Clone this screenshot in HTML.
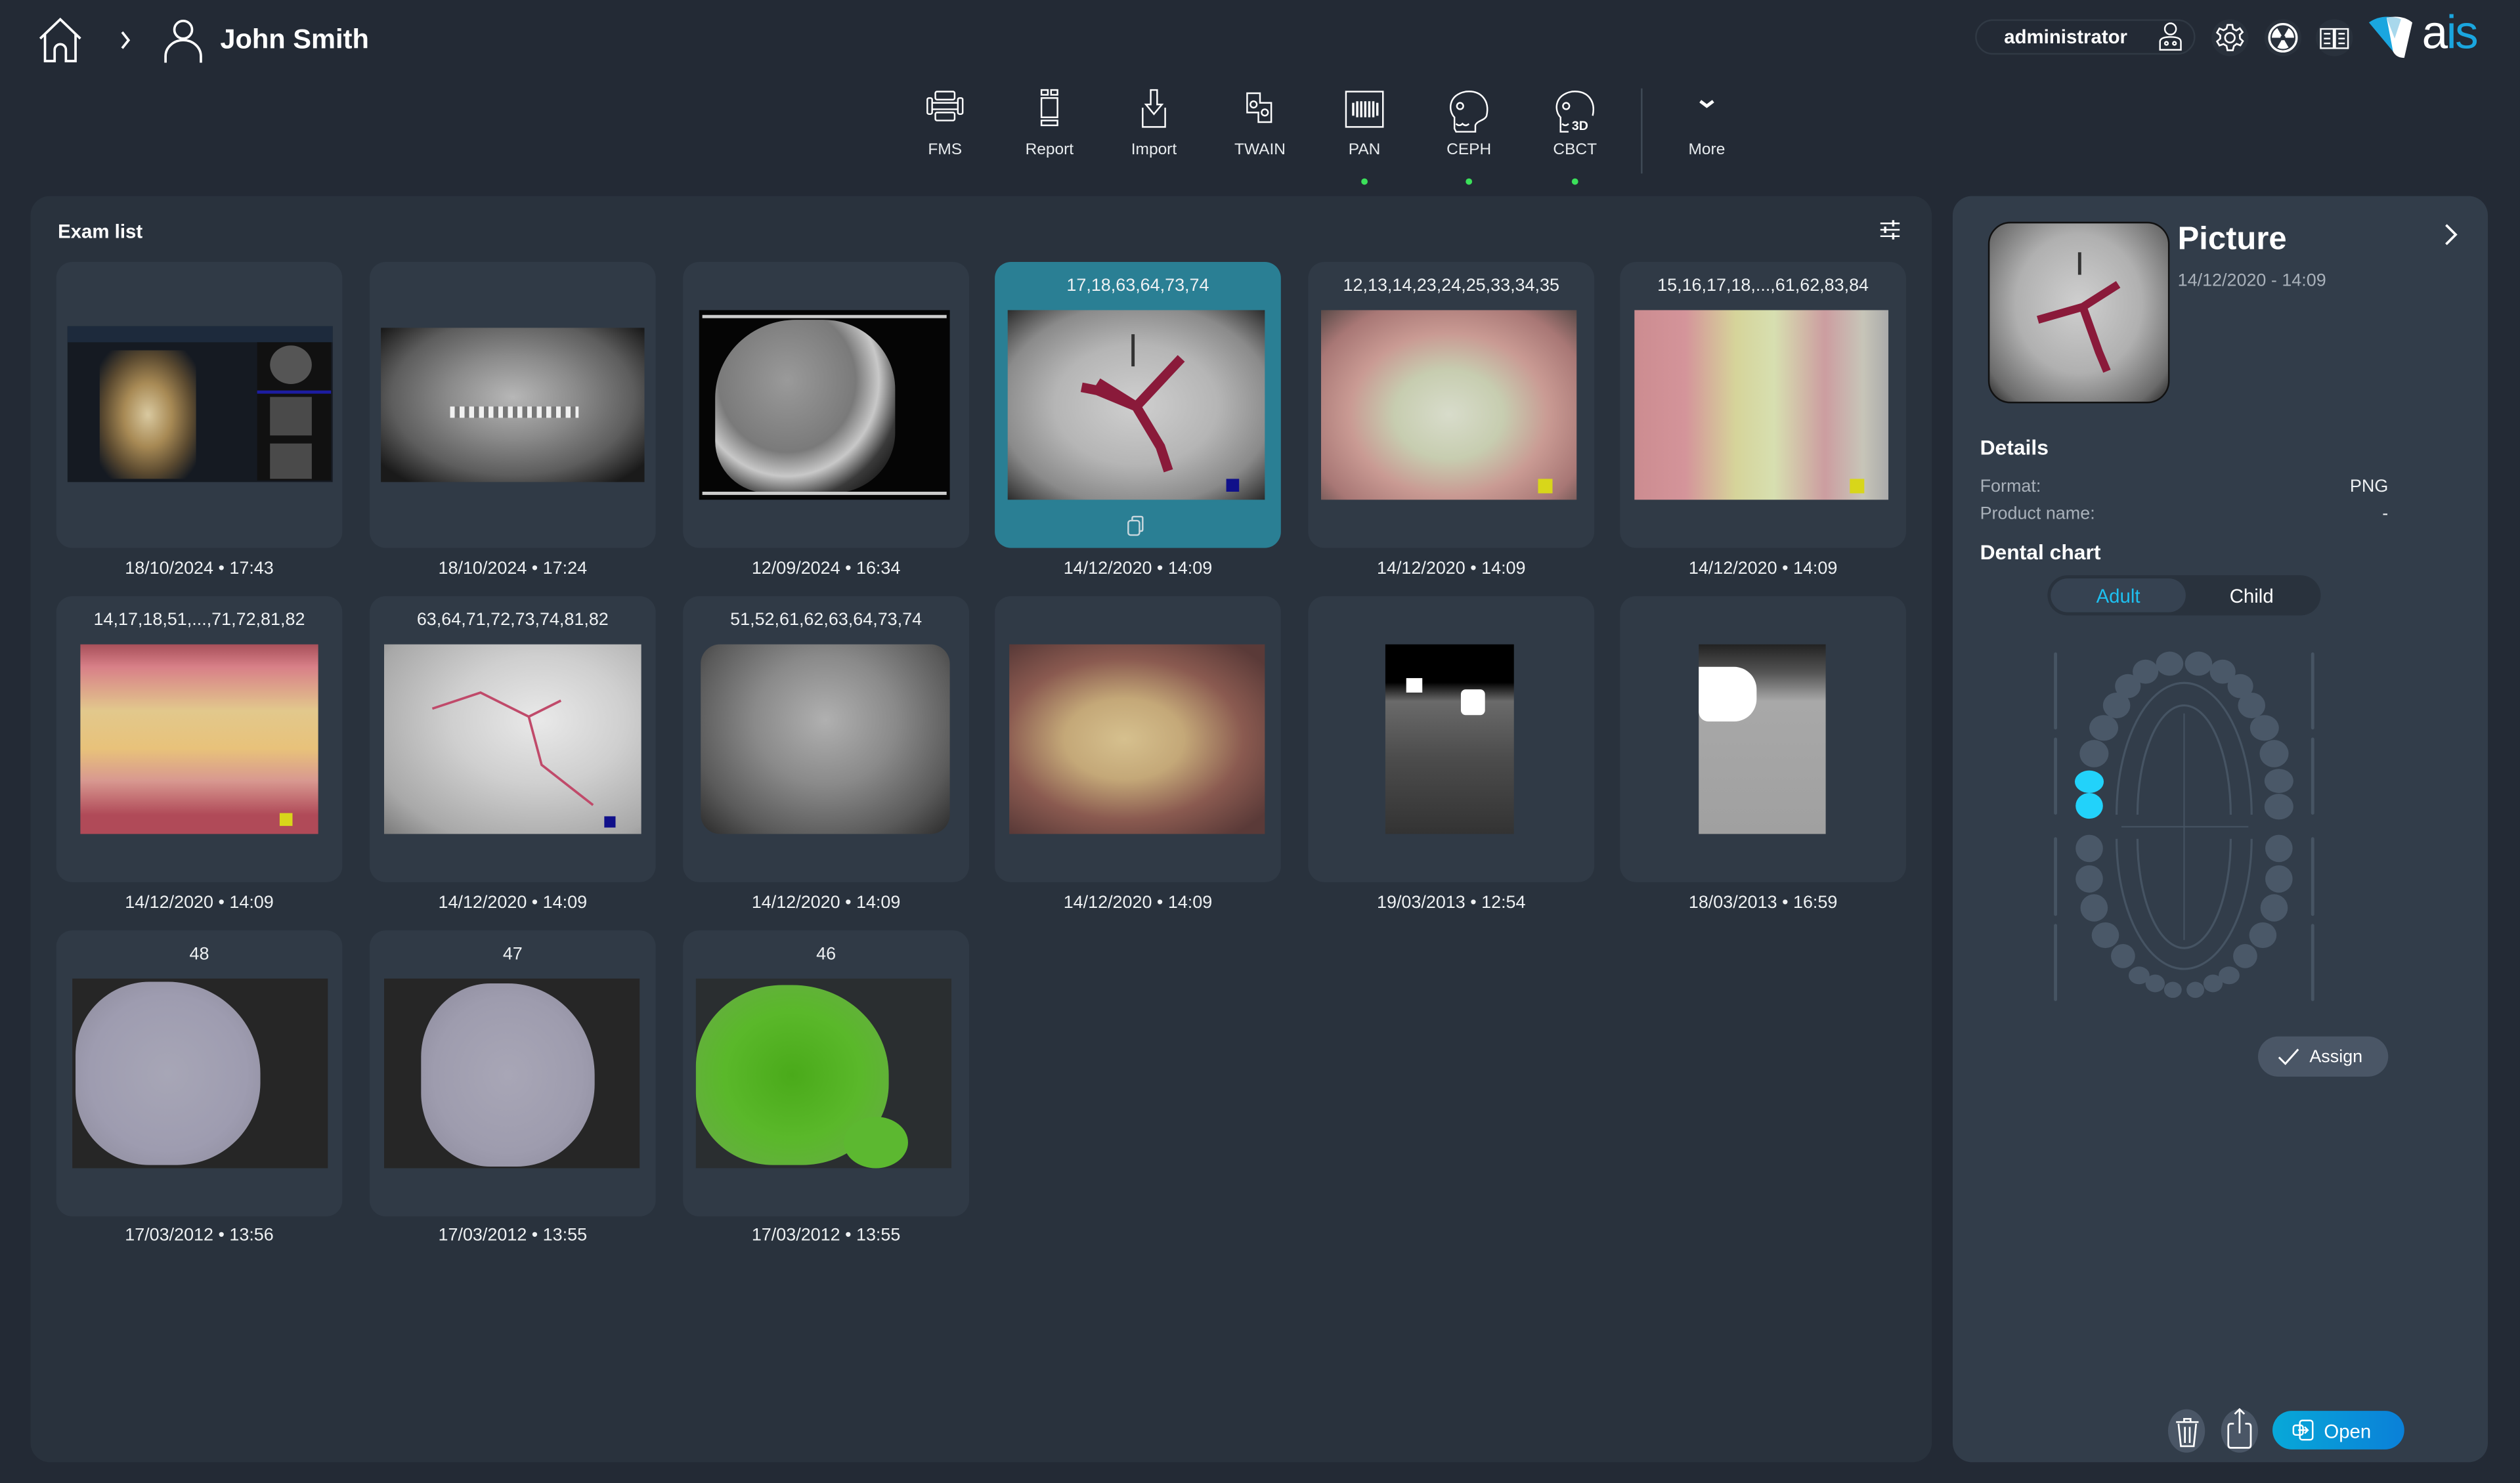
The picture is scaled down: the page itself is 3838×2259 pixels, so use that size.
<!DOCTYPE html>
<html><head><meta charset="utf-8">
<style>
html,body{margin:0;padding:0;background:#232a35;overflow:hidden;}
body{width:3838px;height:2258px;}
#s{position:absolute;left:0;top:0;width:1568px;height:923px;transform:scale(2.44770);transform-origin:0 0;font-family:"Liberation Sans",sans-serif;color:#fff;background:#232a35;}
.a{position:absolute;}
.card{position:absolute;width:178px;height:178px;border-radius:10px;background:#303a46;}
.sel{background:#2a7f94;}
.lbl{position:absolute;width:178px;text-align:center;font-size:11px;color:#eef1f3;}
.date{position:absolute;width:178px;text-align:center;font-size:11px;color:#eef1f3;}
.im{position:absolute;}
.tb{position:absolute;top:55px;width:60px;text-align:center;font-size:10px;color:#e8ecef;}
.tb svg{display:block;margin:0 auto;}
.tb span{position:absolute;left:0;width:60px;top:33px;}
.dot{position:absolute;width:4px;height:4px;border-radius:2px;background:#3be05a;top:111px;}
.circ{position:absolute;top:12px;width:23px;height:23px;border-radius:12px;background:#29313c;}
</style></head><body><div id="s">

<svg class="a" style="left:22px;top:10px" width="32" height="32" viewBox="0 0 32 32" fill="none" stroke="#fff" stroke-width="1.5"><path d="M3 14 L15.5 2 L28 14 M6 11 V28 H12 V21 A3.5 3.5 0 0 1 19 21 V28 H25 V11"/></svg>
<svg class="a" style="left:73px;top:18px" width="10" height="14" viewBox="0 0 10 14" fill="none" stroke="#fff" stroke-width="1.5"><path d="M3 2 L7 7 L3 12"/></svg>
<svg class="a" style="left:101px;top:11px" width="26" height="30" viewBox="0 0 26 30" fill="none" stroke="#fff" stroke-width="1.5"><circle cx="13" cy="7.5" r="5.5"/><path d="M2 28 V24 A11 10 0 0 1 24 24 V28"/></svg>
<div class="a" style="left:137px;top:15px;font-size:17px;font-weight:bold;">John Smith</div>

<div class="tb" style="left:558px"><svg width="26" height="24" viewBox="0 0 26 24" fill="none" stroke="#fff" stroke-width="1"><rect x="2" y="6" width="3" height="10" rx="1"/><rect x="21" y="6" width="3" height="10" rx="1"/><rect x="7" y="2" width="12" height="5" rx="1"/><rect x="7" y="15" width="12" height="5" rx="1"/><path d="M5 9 H21 M5 13 H21"/></svg><span>FMS</span></div>
<div class="tb" style="left:623px"><svg width="26" height="24" viewBox="0 0 26 24" fill="none" stroke="#fff" stroke-width="1"><rect x="8" y="1" width="4" height="3"/><rect x="14" y="1" width="4" height="3"/><rect x="8" y="6" width="10" height="12"/><rect x="8" y="20" width="10" height="3"/></svg><span>Report</span></div>
<div class="tb" style="left:688px"><svg width="26" height="26" viewBox="0 0 26 26" fill="none" stroke="#fff" stroke-width="1"><path d="M11 1 H15 V10 H18 L13 16 L8 10 H11 Z"/><path d="M6 12 V24 H20 V12"/></svg><span>Import</span></div>
<div class="tb" style="left:754px"><svg width="26" height="26" viewBox="0 0 26 26" fill="none" stroke="#fff" stroke-width="1"><path d="M5 3 H13 V9 H20 V21 H12 V15 H5 Z"/><circle cx="9" cy="10" r="2"/><circle cx="16" cy="15" r="2"/></svg><span>TWAIN</span></div>
<div class="tb" style="left:819px"><svg width="26" height="26" viewBox="0 0 26 26" fill="none" stroke="#fff" stroke-width="1"><rect x="1.5" y="2" width="23" height="22"/><path d="M6 9 V17 M8.5 8 V18 M11 8 V18 M13.5 8 V18 M16 8 V18 M18.5 8 V18 M21 9 V17" stroke-width="1.4"/></svg><span>PAN</span></div>
<div class="tb" style="left:884px"><svg width="28" height="30" viewBox="0 0 28 30" fill="none" stroke="#fff" stroke-width="1"><path d="M5 25 V18 C1 14 1 4 12 2 C22 1 27 8 25 17 C24 20 19 20 18 23 V27 H6 Z"/><circle cx="8.5" cy="11" r="2"/><path d="M6 22 Q8 24 10 22 Q12 24 14 22"/></svg><span>CEPH</span></div>
<div class="tb" style="left:950px"><svg width="28" height="30" viewBox="0 0 28 30" fill="none" stroke="#fff" stroke-width="1"><path d="M5 25 V18 C1 14 1 4 12 2 C22 1 27 8 25 17"/><path d="M5 25 V27 H10"/><circle cx="8.5" cy="11" r="2"/><path d="M6 22 Q8 24 10 22"/><text x="12" y="26" font-size="8" font-weight="bold" fill="#fff" stroke="none" font-family="Liberation Sans">3D</text></svg><span>CBCT</span></div>
<div class="dot" style="left:847px"></div><div class="dot" style="left:912px"></div><div class="dot" style="left:978px"></div>
<div class="a" style="left:1021px;top:55px;width:1px;height:53px;background:#3f4a56"></div>
<div class="tb" style="left:1032px"><svg width="26" height="24" viewBox="0 0 26 24" fill="none" stroke="#fff" stroke-width="2"><path d="M9 8 L13 11 L17 8"/></svg><span>More</span></div>

<div class="a" style="left:1229px;top:12px;width:137px;height:22px;border-radius:12px;background:#232a35;border:1px solid #303944;box-sizing:border-box"></div>
<div class="a" style="left:1247px;top:16px;font-size:12px;font-weight:bold">administrator</div>
<svg class="a" style="left:1342px;top:13px" width="17" height="19" viewBox="0 0 17 19" fill="none" stroke="#fff" stroke-width="1"><circle cx="8.5" cy="5" r="3.5"/><path d="M2 18 V13 Q2 10 8.5 10 Q15 10 15 13 V18 Z"/><circle cx="6" cy="14" r="1"/><circle cx="11" cy="14" r="1"/></svg>
<div class="circ" style="left:1376px"></div><div class="circ" style="left:1409px"></div><div class="circ" style="left:1441px"></div>
<svg class="a" style="left:1378px;top:14px" width="19" height="19" viewBox="0 0 19 19" fill="none" stroke="#fff" stroke-width="1.1"><path d="M8 1.5 H11 L11.5 4 L13.5 5 L15.7 3.6 L17.4 6 L15.6 7.7 L15.8 10 L17.6 11.6 L16 14.2 L13.7 13.3 L12 14.6 L11.3 17.3 H8 L7.4 14.6 L5.5 13.4 L3 14.3 L1.5 11.8 L3.5 10 V8 L1.5 6.3 L3 3.7 L5.5 4.8 L7.4 3.8 Z"/><circle cx="9.5" cy="9.5" r="3"/></svg>
<svg class="a" style="left:1410px;top:13px" width="21" height="21" viewBox="0 0 21 21"><circle cx="10.5" cy="10.5" r="8.5" fill="none" stroke="#fff" stroke-width="1.4"/><path d="M10.5 10.5 L7 4.5 A7 7 0 0 0 3.6 10.5 Z M10.5 10.5 L14 4.5 A7 7 0 0 1 17.4 10.5 Z M10.5 10.5 L7 16.5 A7 7 0 0 0 14 16.5 Z" fill="#fff"/><circle cx="10.5" cy="10.5" r="1.6" fill="#29313c"/></svg>
<svg class="a" style="left:1442px;top:13px" width="21" height="21" viewBox="0 0 21 21" fill="none" stroke="#fff" stroke-width="1"><path d="M2 5 H10 V17 H2 Z M11 5 H19 V17 H11 Z M4 8 H8 M4 11 H8 M4 14 H8 M13 8 H17 M13 11 H17 M13 14 H17"/></svg>
<svg class="a" style="left:1473px;top:8px" width="36" height="30" viewBox="0 0 36 30"><path d="M1 6 Q8 1 18 3 L16 24 Z" fill="#1aa6df"/><path d="M12 3 Q22 1 28 6 L23 28 Q18 28 16 24 Z" fill="#fff"/><path d="M12 3 Q17 2 21 4 L17 16 Z" fill="#a8d8ec"/></svg>
<div class="a" style="left:1507px;top:5px;font-size:29px;color:#fff;letter-spacing:-1px">a<span style="color:#1aa6df">is</span></div>

<div class="a" style="left:19px;top:122px;width:1183px;height:788px;border-radius:12px;background:#29323d"></div>
<div class="a" style="left:36px;top:137px;font-size:12px;font-weight:bold">Exam list</div>
<svg class="a" style="left:1168px;top:135px" width="16" height="16" viewBox="0 0 16 16" fill="none" stroke="#fff" stroke-width="1"><path d="M2 4 H14 M2 8 H14 M2 12 H14"/><path d="M10 2 V6 M5 6 V10 M10 10 V14" stroke-width="1.4"/></svg>

<div class="card" style="left:35px;top:163px"></div>
<div class="card" style="left:230px;top:163px"></div>
<div class="card" style="left:425px;top:163px"></div>
<div class="card sel" style="left:619px;top:163px"></div>
<div class="card" style="left:814px;top:163px"></div>
<div class="card" style="left:1008px;top:163px"></div>
<div class="lbl" style="left:619px;top:172px">17,18,63,64,73,74</div>
<div class="lbl" style="left:814px;top:172px">12,13,14,23,24,25,33,34,35</div>
<div class="lbl" style="left:1008px;top:172px">15,16,17,18,...,61,62,83,84</div>

<div class="im" style="left:42px;top:203px;width:165px;height:97px;background:#151a22"></div>
<div class="im" style="left:42px;top:203px;width:165px;height:10px;background:#1d2a3c"></div>
<div class="im" style="left:62px;top:218px;width:60px;height:80px;background:radial-gradient(ellipse at 50% 50%,#d9c9a0 0%,#a88a55 35%,#5b4a30 65%,#151a22 90%)"></div>
<div class="im" style="left:160px;top:213px;width:46px;height:86px;background:#111"></div>
<div class="im" style="left:168px;top:215px;width:26px;height:24px;border-radius:50%;background:#555"></div>
<div class="im" style="left:168px;top:247px;width:26px;height:24px;background:#4a4a4a"></div>
<div class="im" style="left:168px;top:276px;width:26px;height:22px;background:#4a4a4a"></div>
<div class="im" style="left:160px;top:243px;width:46px;height:2px;background:#1d1da0"></div>

<div class="im" style="left:237px;top:204px;width:164px;height:96px;background:radial-gradient(ellipse at 50% 45%,#b7b7b7 0%,#8a8a8a 35%,#5d5d5d 65%,#1a1a1a 90%)"></div>
<div class="im" style="left:280px;top:253px;width:80px;height:7px;background:repeating-linear-gradient(90deg,#f0f0f0 0 3px,#777 3px 6px)"></div>

<div class="im" style="left:435px;top:193px;width:156px;height:118px;background:#050505"></div>
<div class="im" style="left:445px;top:199px;width:112px;height:108px;border-radius:45% 40% 35% 30%;background:radial-gradient(ellipse at 40% 35%,#9a9a9a 0%,#7a7a7a 45%,#c8c8c8 60%,#3a3a3a 75%,#050505 95%)"></div>
<div class="im" style="left:437px;top:196px;width:152px;height:2px;background:#ccc"></div>
<div class="im" style="left:437px;top:306px;width:152px;height:2px;background:#ccc"></div>

<div class="im" style="left:627px;top:193px;width:160px;height:118px;background:radial-gradient(ellipse at 50% 50%,#cfcfcf 0%,#b5b5b5 45%,#8a8a8a 75%,#2b2b2b 100%)"></div>
<svg class="im" style="left:627px;top:193px" width="160" height="118"><path d="M56 45 L80 60 L108 30 M80 60 L95 85 L100 100 M80 60 L56 50 L46 48" stroke="#8a1a3a" stroke-width="6" fill="none"/><path d="M78 15 V35" stroke="#333" stroke-width="2"/></svg>
<div class="im" style="left:763px;top:298px;width:8px;height:8px;background:#10108a"></div>
<svg class="a" style="left:700px;top:320px" width="14" height="14" viewBox="0 0 14 14" fill="none" stroke="#c8d7dd" stroke-width="1"><rect x="2" y="4" width="7" height="9" rx="1.5"/><path d="M4.5 4 V2.5 Q4.5 1.5 5.5 1.5 H10 Q11 1.5 11 2.5 V9.5 Q11 10.5 10 10.5 H9"/></svg>

<div class="im" style="left:822px;top:193px;width:159px;height:118px;background:radial-gradient(ellipse at 50% 55%,#d8dccb 0%,#c7cdb0 30%,#c99a93 55%,#a87775 80%,#5a4a48 100%)"></div>
<div class="im" style="left:957px;top:298px;width:9px;height:9px;background:#d8d61a"></div>
<div class="im" style="left:1017px;top:193px;width:158px;height:118px;background:linear-gradient(90deg,#cc8c90 0%,#d4949a 20%,#d6d49a 40%,#d7dfb0 55%,#cc9da0 75%,#c7c5b8 90%,#aaa 100%)"></div>
<div class="im" style="left:1151px;top:298px;width:9px;height:9px;background:#d8d61a"></div>

<div class="date" style="left:35px;top:348px">18/10/2024 • 17:43</div>
<div class="date" style="left:230px;top:348px">18/10/2024 • 17:24</div>
<div class="date" style="left:425px;top:348px">12/09/2024 • 16:34</div>
<div class="date" style="left:619px;top:348px">14/12/2020 • 14:09</div>
<div class="date" style="left:814px;top:348px">14/12/2020 • 14:09</div>
<div class="date" style="left:1008px;top:348px">14/12/2020 • 14:09</div>

<div class="card" style="left:35px;top:371px"></div>
<div class="card" style="left:230px;top:371px"></div>
<div class="card" style="left:425px;top:371px"></div>
<div class="card" style="left:619px;top:371px"></div>
<div class="card" style="left:814px;top:371px"></div>
<div class="card" style="left:1008px;top:371px"></div>
<div class="lbl" style="left:35px;top:380px">14,17,18,51,...,71,72,81,82</div>
<div class="lbl" style="left:230px;top:380px">63,64,71,72,73,74,81,82</div>
<div class="lbl" style="left:425px;top:380px">51,52,61,62,63,64,73,74</div>

<div class="im" style="left:50px;top:401px;width:148px;height:118px;background:linear-gradient(180deg,#a8505a 0%,#d88088 12%,#e2c88c 35%,#e8c27a 55%,#d89890 72%,#b04a58 90%)"></div>
<div class="im" style="left:174px;top:506px;width:8px;height:8px;background:#d8d61a"></div>
<div class="im" style="left:239px;top:401px;width:160px;height:118px;background:radial-gradient(ellipse at 60% 40%,#e9e9e9 0%,#cfcfcf 40%,#a8a8a8 80%,#7a7a7a 100%)"></div>
<svg class="im" style="left:239px;top:401px" width="160" height="118"><path d="M30 40 L60 30 L90 45 L110 35 M90 45 L98 75 L130 100" stroke="#c04a6a" stroke-width="1.5" fill="none"/></svg>
<div class="im" style="left:376px;top:508px;width:7px;height:7px;background:#10108a"></div>
<div class="im" style="left:436px;top:401px;width:155px;height:118px;border-radius:12px;background:radial-gradient(ellipse at 50% 40%,#b0b0b0 0%,#8a8a8a 40%,#5a5a5a 75%,#2a2a2a 100%)"></div>
<div class="im" style="left:628px;top:401px;width:159px;height:118px;background:radial-gradient(ellipse at 45% 50%,#d6c08e 0%,#c4a878 30%,#8a5a50 60%,#5a3a38 90%)"></div>
<div class="im" style="left:862px;top:401px;width:80px;height:118px;background:linear-gradient(180deg,#000 0%,#000 20%,#6a6a6a 30%,#4c4c4c 60%,#333 100%)"></div>
<div class="im" style="left:875px;top:422px;width:10px;height:9px;background:#fff"></div>
<div class="im" style="left:909px;top:429px;width:15px;height:16px;background:#fff;border-radius:3px"></div>
<div class="im" style="left:1057px;top:401px;width:79px;height:118px;background:linear-gradient(180deg,#222 0%,#555 15%,#a8a8a8 30%,#a0a0a0 100%)"></div>
<div class="im" style="left:1057px;top:415px;width:36px;height:34px;background:#fff;border-radius:0 14px 14px 6px"></div>

<div class="date" style="left:35px;top:556px">14/12/2020 • 14:09</div>
<div class="date" style="left:230px;top:556px">14/12/2020 • 14:09</div>
<div class="date" style="left:425px;top:556px">14/12/2020 • 14:09</div>
<div class="date" style="left:619px;top:556px">14/12/2020 • 14:09</div>
<div class="date" style="left:814px;top:556px">19/03/2013 • 12:54</div>
<div class="date" style="left:1008px;top:556px">18/03/2013 • 16:59</div>

<div class="card" style="left:35px;top:579px"></div>
<div class="card" style="left:230px;top:579px"></div>
<div class="card" style="left:425px;top:579px"></div>
<div class="lbl" style="left:35px;top:588px">48</div>
<div class="lbl" style="left:230px;top:588px">47</div>
<div class="lbl" style="left:425px;top:588px">46</div>
<div class="im" style="left:45px;top:609px;width:159px;height:118px;background:#262626"></div>
<div class="im" style="left:47px;top:611px;width:115px;height:114px;border-radius:40% 50% 45% 40%;background:radial-gradient(ellipse,#a7a6b6 0%,#9e9cb0 60%,#8a8898 100%)"></div>
<div class="im" style="left:239px;top:609px;width:159px;height:118px;background:#262626"></div>
<div class="im" style="left:262px;top:612px;width:108px;height:114px;border-radius:40% 50% 45% 40%;background:radial-gradient(ellipse,#a8a6b6 0%,#9e9cae 60%,#8a889a 100%)"></div>
<div class="im" style="left:433px;top:609px;width:159px;height:118px;background:#2a2e30"></div>
<div class="im" style="left:433px;top:613px;width:120px;height:112px;border-radius:45% 50% 45% 40%;background:radial-gradient(ellipse,#4aaa1a 0%,#5ab82a 50%,#6aaa4a 100%)"></div>
<div class="im" style="left:525px;top:695px;width:40px;height:32px;border-radius:50%;background:#5cb830"></div>

<div class="date" style="left:35px;top:763px">17/03/2012 • 13:56</div>
<div class="date" style="left:230px;top:763px">17/03/2012 • 13:55</div>
<div class="date" style="left:425px;top:763px">17/03/2012 • 13:55</div>

<div class="a" style="left:1215px;top:122px;width:333px;height:788px;border-radius:12px;background:#323d4a"></div>
<div class="a" style="left:1237px;top:138px;width:113px;height:113px;border-radius:14px;overflow:hidden;background:radial-gradient(ellipse at 50% 45%,#cfcfcf 0%,#b0b0b0 50%,#6a6a6a 85%,#222 100%);border:1px solid #111;box-sizing:border-box">
<svg width="113" height="113" style="position:absolute;left:0;top:0"><path d="M30 60 L58 52 L80 38 M58 52 L68 80 L73 92" stroke="#8a1a3a" stroke-width="5" fill="none"/><path d="M56 18 V32" stroke="#333" stroke-width="2"/></svg></div>
<div class="a" style="left:1355px;top:138px;font-size:20px;font-weight:bold">Picture</div>
<div class="a" style="left:1355px;top:169px;font-size:11px;color:#a9b1ba">14/12/2020 - 14:09</div>
<svg class="a" style="left:1518px;top:138px" width="14" height="16" viewBox="0 0 14 16" fill="none" stroke="#fff" stroke-width="1.5"><path d="M4 2 L10 8 L4 14"/></svg>
<div class="a" style="left:1232px;top:271px;font-size:13px;font-weight:bold">Details</div>
<div class="a" style="left:1232px;top:297px;font-size:11px;color:#a9b1ba">Format:</div>
<div class="a" style="left:1232px;top:314px;font-size:11px;color:#a9b1ba">Product name:</div>
<div class="a" style="left:1440px;top:297px;width:46px;text-align:right;font-size:11px;color:#eef1f3">PNG</div>
<div class="a" style="left:1440px;top:314px;width:46px;text-align:right;font-size:11px;color:#eef1f3">-</div>
<div class="a" style="left:1232px;top:336px;font-size:13px;font-weight:bold">Dental chart</div>

<div class="a" style="left:1274px;top:358px;width:170px;height:25px;border-radius:13px;background:#29323d"></div>
<div class="a" style="left:1276px;top:360px;width:84px;height:21px;border-radius:11px;background:#364251"></div>
<div class="a" style="left:1276px;top:364px;width:84px;text-align:center;font-size:12px;color:#1ec0f0">Adult</div>
<div class="a" style="left:1360px;top:364px;width:82px;text-align:center;font-size:12px;color:#fff">Child</div>

<svg class="a" style="left:1260px;top:395px" width="200" height="240" viewBox="1260 395 200 240">
<g stroke="#465463" stroke-width="2" stroke-linecap="round"><path d="M1279 407 V453 M1279 460 V506 M1279 522 V569 M1279 576 V622 M1439 407 V453 M1439 460 V506 M1439 522 V569 M1439 576 V622"/></g>
<g stroke="#465463" stroke-width="1.3" fill="none"><path d="M1317 507 A42 82 0 0 1 1401 507"/><path d="M1317 522 A42 81 0 0 0 1401 522"/><path d="M1330 507 A29 68 0 0 1 1388 507"/><path d="M1330 522 A29 68 0 0 0 1388 522"/><path d="M1359 444 V585 M1320 514.5 H1399" stroke-width="0.8"/></g>
<g fill="#4a5868">
<ellipse cx="1350" cy="413" rx="8.5" ry="7.5"/><ellipse cx="1335" cy="418" rx="8" ry="7.5"/><ellipse cx="1324" cy="427" rx="8" ry="7.5"/><ellipse cx="1317" cy="439" rx="8.5" ry="8"/><ellipse cx="1309" cy="453" rx="9" ry="8"/><ellipse cx="1303" cy="469" rx="9" ry="8.5"/>
<ellipse cx="1368" cy="413" rx="8.5" ry="7.5"/><ellipse cx="1383" cy="418" rx="8" ry="7.5"/><ellipse cx="1394" cy="427" rx="8" ry="7.5"/><ellipse cx="1401" cy="439" rx="8.5" ry="8"/><ellipse cx="1409" cy="453" rx="9" ry="8"/><ellipse cx="1415" cy="469" rx="9" ry="8.5"/><ellipse cx="1418" cy="486" rx="9" ry="7.5"/><ellipse cx="1418" cy="502" rx="9" ry="8"/>
<ellipse cx="1300" cy="528" rx="8.5" ry="8.5"/><ellipse cx="1300" cy="547" rx="8.5" ry="8.5"/><ellipse cx="1303" cy="565" rx="8.5" ry="8.5"/><ellipse cx="1310" cy="582" rx="8.5" ry="8"/><ellipse cx="1321" cy="595" rx="7.5" ry="7.5"/><ellipse cx="1331" cy="607" rx="6.5" ry="5.5"/><ellipse cx="1341" cy="612" rx="6" ry="5.5"/><ellipse cx="1352" cy="616" rx="5.5" ry="5"/>
<ellipse cx="1418" cy="528" rx="8.5" ry="8.5"/><ellipse cx="1418" cy="547" rx="8.5" ry="8.5"/><ellipse cx="1415" cy="565" rx="8.5" ry="8.5"/><ellipse cx="1408" cy="582" rx="8.5" ry="8"/><ellipse cx="1397" cy="595" rx="7.5" ry="7.5"/><ellipse cx="1387" cy="607" rx="6.5" ry="5.5"/><ellipse cx="1377" cy="612" rx="6" ry="5.5"/><ellipse cx="1366" cy="616" rx="5.5" ry="5"/>
</g>
<g fill="#22d2fa"><ellipse cx="1300" cy="486.5" rx="9" ry="7"/><ellipse cx="1300" cy="501.5" rx="8.5" ry="8"/></g>
</svg>

<div class="a" style="left:1405px;top:645px;width:81px;height:25px;border-radius:13px;background:#4a5666"></div>
<svg class="a" style="left:1417px;top:652px" width="14" height="12" viewBox="0 0 14 12" fill="none" stroke="#fff" stroke-width="1.2"><path d="M1 6 L5 10 L13 1"/></svg>
<div class="a" style="left:1437px;top:652px;font-size:11px;color:#fff">Assign</div>

<div class="a" style="left:1349px;top:877px;width:23px;height:27px;border-radius:50%;background:#4a5666"></div>
<svg class="a" style="left:1352px;top:880px" width="18" height="22" viewBox="0 0 18 22" fill="none" stroke="#fff" stroke-width="1.1"><path d="M2 5 H16 M7 5 V3 H11 V5 M3.5 6 L5 20 H13 L14.5 6 M7.5 8 V18 M10.5 8 V18"/></svg>
<div class="a" style="left:1382px;top:877px;width:23px;height:27px;border-radius:50%;background:#4a5666"></div>
<svg class="a" style="left:1384px;top:875px" width="19" height="28" viewBox="0 0 19 28" fill="none" stroke="#fff" stroke-width="1.1"><path d="M9.5 2 V17 M6.5 5 L9.5 2 L12.5 5 M6 11 H4 Q2.5 11 2.5 13 V24 Q2.5 26 4 26 H15 Q16.5 26 16.5 24 V13 Q16.5 11 15 11 H13"/></svg>
<div class="a" style="left:1414px;top:878px;width:82px;height:24px;border-radius:12px;background:linear-gradient(90deg,#08a8d8,#0a80d8)"></div>
<svg class="a" style="left:1426px;top:883px" width="15" height="14" viewBox="0 0 15 14" fill="none" stroke="#fff" stroke-width="1"><rect x="5" y="1" width="8" height="12" rx="1.5"/><rect x="1" y="4" width="6" height="6" rx="1.5"/><path d="M4 7 H10 M8 5 L10 7 L8 9"/></svg>
<div class="a" style="left:1446px;top:884px;font-size:12px;color:#fff">Open</div>

</div></body></html>
